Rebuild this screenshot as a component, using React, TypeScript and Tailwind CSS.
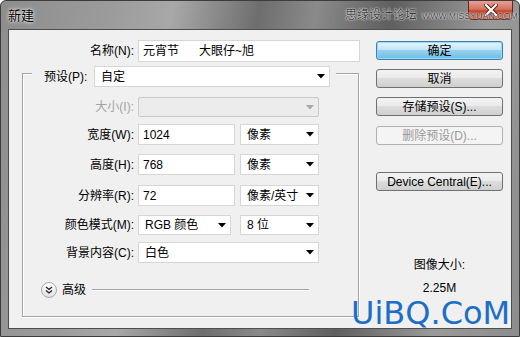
import React from "react";

const FONT = { fontFamily: '"Liberation Sans", "Noto Sans CJK SC", sans-serif' };

function Arrow({ disabled }: { disabled?: boolean }) {
  return (
    <svg width="8" height="5" viewBox="0 0 8 5" className="shrink-0">
      <path d="M0 0 L8 0 L4 4.5 Z" fill={disabled ? "#a8a8a8" : "#000"} />
    </svg>
  );
}

function Select({ w, text, disabled, h = 21 }: { w: string; text?: string; disabled?: boolean; h?: number }) {
  return (
    <div
      className={`${w} ${h === 20 ? "h-[20px]" : "h-[21px]"} flex items-center justify-between pl-[6px] pr-[4px] border ${
        disabled ? "bg-[#ececec] border-[#c9c9c9] rounded-[2px]" : "bg-white border-[#d6d6d6]"
      }`}
    >
      <span className="text-[12px] leading-none text-black whitespace-pre">{text}</span>
      <Arrow disabled={disabled} />
    </div>
  );
}

function Input({ w, text }: { w: string; text: string }) {
  return (
    <div className={`${w} h-[21px] flex items-center pl-[4px] bg-white border border-[#d6d6d6]`}>
      <span className="text-[12px] leading-none text-black whitespace-pre">{text}</span>
    </div>
  );
}

function Label({ text, disabled }: { text: string; disabled?: boolean }) {
  return (
    <div className={`w-[111px] text-right text-[12px] leading-none ${disabled ? "text-[#a3a3a3]" : "text-black"}`}>{text}</div>
  );
}

function Btn({ text, primary, disabled }: { text: string; primary?: boolean; disabled?: boolean }) {
  let cls =
    "bg-[linear-gradient(#f3f3f3_0%,#ebebeb_45%,#dddddd_50%,#cfcfcf_100%)] border-[#707070] text-black";
  if (primary)
    cls =
      "bg-[linear-gradient(#e5f5fc_0%,#c4e5f6_45%,#98d1ef_50%,#6cbce6_100%)] border-[#3c7fb1] shadow-[inset_0_0_0_1px_#94dcf8] text-black";
  if (disabled) cls = "bg-[#f4f4f4] border-[#adb2b5] text-[#9a9a9a]";
  return (
    <div className={`w-[127px] h-[19px] rounded-[3px] border flex items-center justify-center text-[12px] leading-none ${cls}`}>
      {text}
    </div>
  );
}

export default function App() {
  return (
    <div
      style={FONT}
      className="relative w-[520px] h-[337px] overflow-hidden bg-[linear-gradient(100deg,#8d8d8d_0%,#9c9c9c_20%,#a8a8a8_30%,#6e6e6e_45%,#8a8a8a_55%,#5f5f5f_68%,#9a9a9a_85%,#8c8c8c_100%)] border border-[#3c3c3c] rounded-t-[6px] flex flex-col"
    >
      {/* title bar */}
      <div className="h-[28px] shrink-0 flex items-center pl-[7px]">
        <span className="text-[13px] text-black leading-none" style={{ textShadow: "0 0 4px #fff, 0 0 2px #fff" }}>
          新建
        </span>
      </div>
      <div className="absolute left-[467px] top-[-1px] w-[45px] h-[20px] rounded-b-[4px] border border-[#5a2a24] bg-[linear-gradient(#e8a196_0%,#d4735f_45%,#c4452b_55%,#d0664a_100%)] flex items-center justify-center">
        <svg width="14" height="12" viewBox="0 0 14 12">
          <path d="M2 1 L12 11 M12 1 L2 11" stroke="#4a1a14" strokeWidth="4" strokeLinecap="square" />
          <path d="M2 1 L12 11 M12 1 L2 11" stroke="#fff" strokeWidth="2.2" strokeLinecap="square" />
        </svg>
      </div>
      <div
        className="absolute left-[344px] top-[8px] flex items-baseline gap-[5px] text-[#3a3a3a]"
        style={{ textShadow: "0 0 2px #fff, 0 0 1px #fff" }}
      >
        <span className="text-[12px] leading-none">思缘设计论坛</span>
        <span className="text-[8.5px] leading-none tracking-[0.2px]">WWW.MISSYUAN.COM</span>
      </div>

      {/* content */}
      <div className="mx-[7px] h-[300px] shrink-0 bg-[#f0f0f0] border border-[#4e4e4e] flex">
        {/* left column */}
        <div className="w-[356px] shrink-0 pt-[10px]">
          {/* name */}
          <div className="flex items-center h-[22px]">
            <div className="w-[125px] text-right text-[12px] leading-none text-black">名称(N):</div>
            <div className="ml-[4px] w-[222px] h-[22px] flex items-center pl-[4px] bg-white border border-[#d6d6d6]">
              <span className="text-[12px] leading-none whitespace-pre">元宵节      大眼仔~旭</span>
            </div>
          </div>

          {/* group box */}
          <div className="ml-[13px] mt-[11px] w-[337px] h-[244px] border border-[#a4a4a4] shadow-[inset_1px_1px_0_#fff,1px_1px_0_#fff]">
            <div className="-mt-[8px] ml-[9px] w-fit flex items-center bg-[#f0f0f0] pl-[12px] pr-[6px]">
              <div className="w-[50px] text-[12px] leading-none text-black">预设(P):</div>
              <Select w="w-[236px]" text="自定" />
            </div>

            <div className="mt-[10px] flex items-center">
              <Label text="大小(I):" disabled />
              <div className="ml-[4px]">
                <Select w="w-[181px]" h={20} disabled />
              </div>
            </div>

            <div className="mt-[7px] flex items-center">
              <Label text="宽度(W):" />
              <div className="ml-[4px]">
                <Input w="w-[97px]" text="1024" />
              </div>
              <div className="ml-[5px]">
                <Select w="w-[79px]" text="像素" />
              </div>
            </div>

            <div className="mt-[9px] flex items-center">
              <Label text="高度(H):" />
              <div className="ml-[4px]">
                <Input w="w-[97px]" text="768" />
              </div>
              <div className="ml-[5px]">
                <Select w="w-[79px]" text="像素" />
              </div>
            </div>

            <div className="mt-[10px] flex items-center">
              <Label text="分辨率(R):" />
              <div className="ml-[4px]">
                <Input w="w-[97px]" text="72" />
              </div>
              <div className="ml-[5px]">
                <Select w="w-[79px]" text="像素/英寸" />
              </div>
            </div>

            <div className="mt-[9px] flex items-center">
              <Label text="颜色模式(M):" />
              <div className="ml-[4px]">
                <Select w="w-[93px]" h={20} text="RGB 颜色" />
              </div>
              <div className="ml-[9px]">
                <Select w="w-[79px]" h={20} text="8 位" />
              </div>
            </div>

            <div className="mt-[7px] flex items-center">
              <Label text="背景内容(C):" />
              <div className="ml-[4px]">
                <Select w="w-[181px]" text="白色" />
              </div>
            </div>

            <div className="mt-[19px] ml-[18px] flex items-center">
              <div className="w-[16px] h-[16px] rounded-full border border-[#a9a9a9] bg-[linear-gradient(#ffffff,#e2e2e2)] flex items-center justify-center">
                <svg width="8" height="8" viewBox="0 0 8 8">
                  <path d="M1 1 L4 3.5 L7 1 M1 4.5 L4 7 L7 4.5" stroke="#222" strokeWidth="1.3" fill="none" />
                </svg>
              </div>
              <span className="ml-[5px] text-[12px] leading-none text-black">高级</span>
              <div className="ml-[6px] w-[217px] h-[2px] border-t border-[#a4a4a4] border-b border-b-white" />
            </div>
          </div>
        </div>

        {/* right column */}
        <div className="flex-1 pt-[11px] pl-[11px] flex flex-col">
          <Btn text="确定" primary />
          <div className="mt-[9px]">
            <Btn text="取消" />
          </div>
          <div className="mt-[9px]">
            <Btn text="存储预设(S)..." />
          </div>
          <div className="mt-[10px]">
            <Btn text="删除预设(D)..." disabled />
          </div>
          <div className="mt-[27px]">
            <Btn text="Device Central(E)..." />
          </div>
          <div className="w-[127px] mt-[68px] text-center text-[12px] leading-none text-black">图像大小:</div>
          <div className="w-[127px] mt-[11px] text-center text-[12px] leading-none text-black">2.25M</div>
        </div>
      </div>

      {/* watermark overlay */}
      <div
        className="absolute left-[350px] top-[300px] text-[32px] leading-[24px] text-[#1c6ec6]"
        style={{ fontFamily: '"DejaVu Sans", sans-serif' }}
      >
        UiBQ.CoM
      </div>
    </div>
  );
}
